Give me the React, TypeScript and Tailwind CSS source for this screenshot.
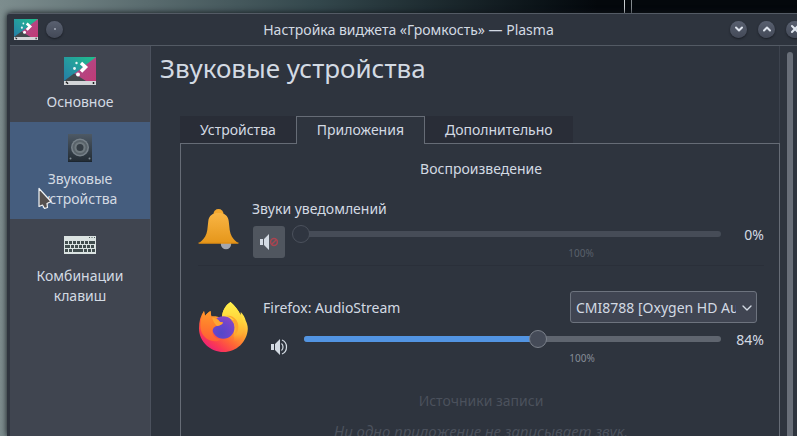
import { useState } from "react";
import type { ComponentType, ReactNode } from "react";
import { ChevronDown, ChevronUp, X } from "lucide-react";

const MAX_VOLUME = 150;

function PlasmaIcon({ className }: { className?: string }) {
  return (
    <svg viewBox="0 0 32 28" className={className} preserveAspectRatio="none" aria-hidden="true">
      <defs>
        <linearGradient id="plasma-teal" x1="0" y1="1" x2="1" y2="0">
          <stop offset="0" stopColor="#2577a8" />
          <stop offset="0.45" stopColor="#2598a0" />
          <stop offset="1" stopColor="#1fc08a" />
        </linearGradient>
        <linearGradient id="plasma-pink" x1="0" y1="0" x2="1" y2="1">
          <stop offset="0" stopColor="#a8508c" />
          <stop offset="1" stopColor="#c23a76" />
        </linearGradient>
      </defs>
      <rect width="32" height="28" fill="url(#plasma-teal)" />
      <path d="M32 0 10 17l11 7h11z" fill="url(#plasma-pink)" />
      <path d="M0 24 10 16.500 22 24z" fill="#42494d" />
      <path d="m17 6 4.500 4-4.500 4.500" fill="none" stroke="#fff" strokeWidth="3.500" />
      <circle cx="12.500" cy="6" r="1.200" fill="#e8f4f4" />
      <circle cx="10.500" cy="11.500" r="1.400" fill="#e8f4f4" />
      <circle cx="14" cy="17.500" r="2" fill="#fff" />
      <rect y="24" width="32" height="4" fill="#d3d5d8" />
      <path d="m2 24.800 2 2M29.500 25v2" stroke="#222" strokeWidth="1.500" />
    </svg>
  );
}

function SpeakerBoxIcon({ className }: { className?: string }) {
  return (
    <svg viewBox="0 0 32 28" className={className} aria-hidden="true">
      <defs>
        <linearGradient id="box" x1="0" y1="0" x2="0" y2="1">
          <stop offset="0" stopColor="#4d5965" />
          <stop offset="1" stopColor="#222b33" />
        </linearGradient>
      </defs>
      <rect x="4" y="0" width="24" height="28" fill="url(#box)" />
      <path d="M4 27.500h24" stroke="#1c2630" />
      <circle cx="16" cy="13.500" r="9" fill="#78828a" />
      <circle cx="16" cy="13.500" r="7.500" fill="#59636a" />
      <circle cx="16" cy="13.500" r="5.500" fill="#6f797f" />
      <circle cx="16" cy="13.500" r="3.500" fill="#343d45" />
      <circle cx="6.500" cy="24.500" r="1" fill="#7f8a92" />
      <circle cx="25.500" cy="24.500" r="1" fill="#7f8a92" />
    </svg>
  );
}

function KeyboardIcon({ className }: { className?: string }) {
  return (
    <svg viewBox="0 0 32 28" className={className} aria-hidden="true">
      <rect x="0" y="5" width="32" height="18" fill="#dbe3e2" />
      <path d="M25 6.500h1M27.500 6.500h1M30 6.500h1" stroke="#4c5a5a" />
      <g stroke="#414d4e" strokeWidth="3">
        <path d="M1 11.500h24" strokeDasharray="3 1" />
        <path d="M25 11.500h6" />
        <path d="M1 15.500h5" />
        <path d="M7 15.500h24" strokeDasharray="3 1" />
        <path d="M1 19.500h8" strokeDasharray="3 1" />
        <path d="M9 19.500h10" />
        <path d="M20 19.500h11" strokeDasharray="3 1" />
      </g>
    </svg>
  );
}

function BellIcon({ className }: { className?: string }) {
  return (
    <svg viewBox="0 0 42 42" className={className} aria-hidden="true">
      <defs>
        <linearGradient id="bell" x1="0" y1="0" x2="0" y2="1">
          <stop offset="0" stopColor="#f9b544" />
          <stop offset="1" stopColor="#e5961a" />
        </linearGradient>
      </defs>
      <circle cx="28" cy="36" r="5.200" fill="#a3a6ae" />
      <circle cx="20.500" cy="6" r="5" fill="#f4a82e" />
      <path
        d="M20.500 5c6 0 9.500 2.500 10.200 8l1 9c.6 5 3.300 8.500 5.300 10.500l3.500 3H.5l3.500-3c2-2 4.700-5.500 5.300-10.500l1-9c.7-5.500 4.200-8 10.200-8z"
        fill="url(#bell)"
      />
      <path d="M.5 35h40" stroke="#e08c10" />
    </svg>
  );
}

function FirefoxIcon({ className }: { className?: string }) {
  return (
    <svg viewBox="0 0 50 50" className={className} aria-hidden="true">
      <defs>
        <linearGradient id="fox-body" x1="0.850" y1="0.150" x2="0.250" y2="0.950">
          <stop offset="0.100" stopColor="#ffe045" />
          <stop offset="0.400" stopColor="#ff9f2e" />
          <stop offset="0.650" stopColor="#ff6636" />
          <stop offset="0.850" stopColor="#fb3b52" />
          <stop offset="1" stopColor="#ee2374" />
        </linearGradient>
        <linearGradient id="fox-flame" x1="0.500" y1="0" x2="0.500" y2="1">
          <stop offset="0" stopColor="#fff14c" />
          <stop offset="0.500" stopColor="#ffd139" />
          <stop offset="0.800" stopColor="#ffae32" />
          <stop offset="1" stopColor="#ff8f2e" stopOpacity="0" />
        </linearGradient>
        <linearGradient id="fox-head" x1="0.300" y1="0" x2="0.200" y2="1">
          <stop offset="0" stopColor="#ff9a2c" />
          <stop offset="0.500" stopColor="#ff7c2c" />
          <stop offset="1" stopColor="#ff5c38" />
        </linearGradient>
        <radialGradient id="fox-globe" cx="0.400" cy="0.750" r="0.800">
          <stop offset="0" stopColor="#5348c9" />
          <stop offset="0.550" stopColor="#6d45cc" />
          <stop offset="1" stopColor="#8c48c4" />
        </radialGradient>
      </defs>
      <path
        d="M31.500 0c4.500 4 8 8 10 13l.3-3c2.500 2.500 4 5 5 9 1 2 2 4.500 2 8C48 40 37.500 50 24.500 50S0 39.500 0 26.500C0 19.500 1.500 13.500 5 9l1 5c1.500-2 3.500-4 5.500-5l.8 5.500c3-.5 6.500 0 10.700 1.500 0-6.500 3-12.500 8.500-16z"
        fill="url(#fox-body)"
      />
      <path
        d="M31.500 0c4.500 4 8 8 10 13 3.500 6 4.500 13 1.500 20-2 4-5 6-8.500 7 2-8 1-19.500-11.500-24 0-6.500 3-12.500 8.500-16z"
        fill="url(#fox-flame)"
      />
      <circle cx="24.300" cy="25.500" r="11.200" fill="url(#fox-globe)" />
      <path
        d="M27 14c3.500.3 6 1.700 8 4l-3-.2c5 4.500 6 11.500 2 17 5.500-3 7-11 3.500-16.500-2.500-3.500-6.500-5.500-10.500-4.300z"
        fill="#ffa52f"
      />
      <path
        d="M5 9l1 5c1.500-2 3.500-4 5.500-5l.8 5.500c3.700.2 6.700 2.500 8.700 5.500l3 .5c-.5 2-3 3-6 3.500-3.500.7-5 3.500-4.500 7 .8 3.500 4 6 8.500 6.500-4 3-10 2-14.500-1C3 33 1 28 1.500 22 1.800 17 3 12.500 5 9z"
        fill="url(#fox-head)"
      />
      <path d="M13 15.500c3.500.3 6 2.200 8 4.500l3 .5c-.5 2-3 3-6 3.500-2.500-2-4-5-5-8.500z" fill="#ffa634" />
    </svg>
  );
}

function VolumeIcon({ muted = false }: { muted?: boolean }) {
  return (
    <svg viewBox="0 0 18 16" className="h-4 w-[18px]" aria-hidden="true">
      <path d="M0 5h3v6H0zM4 5l5-5v16l-5-5z" fill="#d3dae3" />
      {muted ? (
        <g fill="none" stroke="#a94450" strokeWidth="1.500">
          <circle cx="14" cy="8" r="3.400" />
          <path d="m11.500 10.500 5-5" />
        </g>
      ) : (
        <g fill="none" stroke="#d3dae3" strokeWidth="1.200">
          <path d="M10.500 4.500c2 1.500 2 5.500 0 7" />
          <path d="M11 1c6 2.500 6 11.500 0 14" />
        </g>
      )}
    </svg>
  );
}

function TitleButton({ label, children }: { label: string; children: ReactNode }) {
  return (
    <button
      type="button"
      aria-label={label}
      className="flex size-[17px] shrink-0 items-center justify-center rounded-full bg-linear-to-b from-[#596070] to-[#434957] text-[#dfe5ee] shadow-[0_1px_2px_#191c24]"
    >
      {children}
    </button>
  );
}

type SidebarItemProps = {
  icon: ComponentType<{ className?: string }>;
  label: string;
  active?: boolean;
};

function SidebarItem({ icon: Icon, label, active = false }: SidebarItemProps) {
  return (
    <button
      type="button"
      aria-current={active ? "page" : undefined}
      className={
        "flex w-full flex-col items-center gap-[7px] px-5 pt-3 pb-[10px] text-center leading-5 first:pt-[11px] " +
        (active ? "bg-[#455d7e]" : "")
      }
    >
      <Icon className="h-7 w-8" />
      <span>{label}</span>
    </button>
  );
}

type VolumeSliderProps = {
  label: string;
  value: number;
  muted?: boolean;
  onChange: (value: number) => void;
};

function VolumeSlider({ label, value, muted = false, onChange }: VolumeSliderProps) {
  return (
    <div className="relative mr-[9px] flex h-[18px] min-w-0 flex-1 items-center">
      <div className={"h-[6px] w-full rounded-full " + (muted ? "bg-[#464c57]" : "bg-[#5f656f]")}>
        <div
          className="h-full rounded-full bg-[#5294e2]"
          style={{ width: `${(value / MAX_VOLUME) * 100}%` }}
        />
      </div>
      <input
        type="range"
        aria-label={label}
        min={0}
        max={MAX_VOLUME}
        value={value}
        onChange={(e) => onChange(Number(e.target.value))}
        className={
          "absolute inset-y-0 -left-[9px] h-[18px] w-[calc(100%+18px)] appearance-none bg-transparent [&::-webkit-slider-thumb]:size-[18px] [&::-webkit-slider-thumb]:appearance-none [&::-webkit-slider-thumb]:rounded-full [&::-webkit-slider-thumb]:border " +
          (muted
            ? "[&::-webkit-slider-thumb]:border-[#4b515c] [&::-webkit-slider-thumb]:bg-[#2f3540]"
            : "[&::-webkit-slider-thumb]:border-[#7b818b] [&::-webkit-slider-thumb]:bg-[#454b58]")
        }
      />
      <span
        className={
          "absolute top-[21px] left-2/3 -translate-x-1/2 text-[10px] leading-[14px] " +
          (muted ? "text-[#59606b]" : "text-[#868d97]")
        }
      >
        100%
      </span>
    </div>
  );
}

const tabs = ["Устройства", "Приложения", "Дополнительно"];

export default function App() {
  const [tab, setTab] = useState("Приложения");
  const [notifications, setNotifications] = useState(0);
  const [firefox, setFirefox] = useState(84);

  return (
    <div className="relative h-screen overflow-hidden bg-linear-to-r from-[#7d8d8e] via-[#33474c] via-40% to-[#04080c] to-75% pt-[13px] pl-[7px] font-['Noto_Sans',sans-serif] text-[14px] text-[#d3dae3]">
      {/* Wallpaper streaks */}
      <div className="absolute top-0 left-[624px] flex h-[13px] w-2 justify-between">
        <span className="w-px bg-[#c9cdd0]" />
        <span className="w-px bg-[#858b8f]" />
      </div>

      <div className="relative -mr-[10px] flex h-full flex-col rounded-tl-[3px] border-t border-[#545b65] bg-[#2e343e] pl-[3px] shadow-[0_0_6px_#10151b]">
        {/* Title bar */}
        <header className="flex h-8 shrink-0 items-center border-b border-[#535a64] pr-1 pb-px pl-1">
          <PlasmaIcon className="h-[21px] w-6" />
          <span className="ml-2 flex">
            <TitleButton label="На всех рабочих столах">
              <span className="size-[2px] rounded-full bg-[#a6adb8]" />
            </TitleButton>
          </span>
          <h1 className="flex-1 pl-6 text-center">Настройка виджета «Громкость» — Plasma</h1>
          <div className="flex gap-[11px]">
            <TitleButton label="Свернуть">
              <ChevronDown size={12} strokeWidth={4} />
            </TitleButton>
            <TitleButton label="Распахнуть">
              <ChevronUp size={12} strokeWidth={4} />
            </TitleButton>
            <TitleButton label="Закрыть">
              <X size={12} strokeWidth={4} />
            </TitleButton>
          </div>
        </header>

        <div className="flex min-h-0 flex-1">
          {/* Categories */}
          <nav className="w-[141px] shrink-0 border-r border-[#4b515d] bg-[#404550]">
            <SidebarItem icon={PlasmaIcon} label="Основное" />
            <SidebarItem icon={SpeakerBoxIcon} label="Звуковые устройства" active />
            <SidebarItem icon={KeyboardIcon} label="Комбинации клавиш" />
          </nav>

          <main className="flex min-w-0 flex-1 flex-col border-r border-[#3d434e]">
            <h2 className="pt-[3px] pl-[9px] text-[26px] leading-[38px]">Звуковые устройства</h2>

            <div role="tablist" className="mt-[29px] ml-[29px] flex">
              {tabs.map((name) => (
                <button
                  key={name}
                  type="button"
                  role="tab"
                  aria-selected={name === tab}
                  onClick={() => setTab(name)}
                  className={
                    "h-[27px] px-5 leading-5 " +
                    (name === tab
                      ? "relative z-10 -mb-px h-[28px] border border-b-0 border-[#666c76] bg-[#2e343e] pb-[2px]"
                      : "bg-[#292d37]")
                  }
                >
                  {name}
                </button>
              ))}
            </div>

            <section className="-mr-px ml-[29px] flex-1 border border-[#666c76] pr-[15px] pl-[17px]">
              <h3 className="pt-[15px] text-center leading-5">Воспроизведение</h3>

              {/* Notification sounds */}
              <div className="mt-[20px] flex items-center gap-3 border-b border-[#2a2f39] pb-[7px]">
                <BellIcon className="size-[42px] shrink-0" />
                <div className="min-w-0 flex-1">
                  <div className="leading-5">Звуки уведомлений</div>
                  <div className="mt-[6px] flex items-start">
                    <button
                      type="button"
                      aria-label="Включить звук уведомлений"
                      className="mt-px mr-4 ml-px flex size-8 shrink-0 items-center justify-center rounded-[3px] bg-[#50565f]"
                    >
                      <VolumeIcon muted />
                    </button>
                    <VolumeSlider
                      label="Звуки уведомлений"
                      value={notifications}
                      onChange={setNotifications}
                      muted
                    />
                    <output className="w-[34px] text-right leading-5">{notifications}%</output>
                  </div>
                </div>
              </div>

              {/* Firefox stream */}
              <div className="mt-[25px] flex items-center gap-[14px]">
                <FirefoxIcon className="ml-px size-[50px] shrink-0" />
                <div className="min-w-0 flex-1">
                  <div className="flex items-center justify-between pr-[7px]">
                    <label htmlFor="output-device">Firefox: AudioStream</label>
                    <div className="relative w-[187px]">
                      <select
                        id="output-device"
                        className="h-8 w-full appearance-none overflow-hidden rounded-[3px] border border-[#6d737e] bg-[#404552] pr-5 pl-[5px] whitespace-nowrap"
                      >
                        <option>CMI8788 [Oxygen HD Audio]</option>
                      </select>
                      <ChevronDown
                        size={16}
                        strokeWidth={2}
                        className="pointer-events-none absolute top-[9px] right-[2px]"
                      />
                    </div>
                  </div>
                  <div className="mt-[7px] flex items-start">
                    <button
                      type="button"
                      aria-label="Выключить звук Firefox"
                      className="mt-px mr-2 ml-px flex size-8 shrink-0 items-center justify-center"
                    >
                      <VolumeIcon />
                    </button>
                    <VolumeSlider label="Firefox" value={firefox} onChange={setFirefox} />
                    <output className="w-[34px] text-right leading-5">{firefox}%</output>
                  </div>
                </div>
              </div>

              {/* Recording */}
              <h3 className="mt-[28px] text-center leading-5 text-[#4b515c]">Источники записи</h3>
              <p className="mt-[10px] text-center text-[15px] leading-5 text-[#4b515c] italic">
                Ни одно приложение не записывает звук.
              </p>
            </section>
          </main>

          {/* Scrollbar */}
          <div className="w-[27px] shrink-0 pt-[6px] pl-[7px]">
            <div className="h-full w-[6px] rounded-t-full bg-[#696f79]" />
          </div>
        </div>
      </div>

      {/* Mouse pointer */}
      <svg viewBox="0 0 14 24" className="absolute top-[187px] left-[38px] h-6 w-[14px]" aria-hidden="true">
        <path
          d="M1 1.500v18l3.500-1.500 2 3.500 3-1-.5-4 4-2z"
          fill="#55504f"
          stroke="#f1f3f5"
          strokeWidth="1.200"
          strokeLinejoin="round"
        />
      </svg>
    </div>
  );
}
